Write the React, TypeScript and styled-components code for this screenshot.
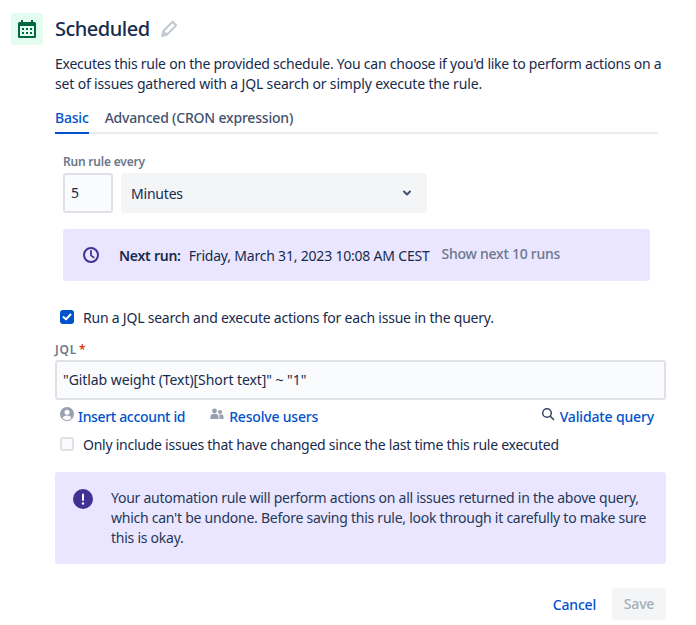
import React from 'react';
import styled, { createGlobalStyle } from 'styled-components';

const GlobalStyle = createGlobalStyle`
  html, body {
    margin: 0;
    padding: 0;
    background: #fff;
    font-family: "Noto Sans", "Open Sans", sans-serif;
    color: #172b4d;
  }
  * { box-sizing: border-box; }
`;

const Page = styled.div`
  width: 696px;
  height: 625px;
  overflow: hidden;
  padding: 13px 30px 0 11px;
  display: flex;
  gap: 12px;
`;

const IconBox = styled.div`
  width: 32px;
  height: 32px;
  flex: none;
  border-radius: 3px;
  background: #e3fcef;
  display: flex;
  align-items: center;
  justify-content: center;
`;

const Main = styled.div`
  flex: 1;
  min-width: 0;
`;

const TitleRow = styled.div`
  height: 32px;
  display: flex;
  align-items: center;
  gap: 10px;
`;

const Title = styled.h1`
  margin: 0;
  font-size: 20px;
  line-height: 32px;
  font-weight: 500;
  letter-spacing: -0.5px;
`;

const Description = styled.p`
  margin: 9px 0 0;
  font-size: 14px;
  line-height: 20px;
  white-space: nowrap;
`;

const DescriptionLine = styled.span<{ $spacing: number }>`
  display: block;
  letter-spacing: ${props => props.$spacing}px;
`;

const Tabs = styled.div`
  margin-top: 8px;
  width: 603px;
  height: 32px;
  display: flex;
  gap: 16px;
  border-bottom: 2px solid #ebecf0;
`;

const Tab = styled.div<{ $active?: boolean }>`
  height: 32px;
  line-height: 32px;
  font-size: 14px;
  font-weight: 500;
  letter-spacing: -0.2px;
  color: ${props => (props.$active ? '#0052cc' : '#42526e')};
  border-bottom: 2px solid ${props => (props.$active ? '#0052cc' : 'transparent')};
`;

const ScheduleBlock = styled.div`
  padding: 20px 0 0 8px;
`;

const FieldLabel = styled.div`
  font-size: 12px;
  line-height: 16px;
  font-weight: 600;
  letter-spacing: -0.2px;
  color: #6b778c;
`;

const ScheduleRow = styled.div`
  margin-top: 3px;
  display: flex;
  gap: 8px;
`;

const NumberInput = styled.div`
  width: 50px;
  height: 40px;
  padding-left: 6px;
  font-size: 14px;
  line-height: 36px;
  background: #fafbfc;
  border: 2px solid #dfe1e6;
  border-radius: 3px;
`;

const SelectBox = styled.div`
  width: 306px;
  height: 40px;
  padding: 0 12px 0 10px;
  display: flex;
  align-items: center;
  justify-content: space-between;
  font-size: 14px;
  letter-spacing: -0.2px;
  background: #f4f5f7;
  border-radius: 3px;
`;

const NextRunBanner = styled.div`
  margin-top: 16px;
  width: 587px;
  height: 52px;
  padding: 0 20px;
  display: flex;
  align-items: center;
  font-size: 14px;
  letter-spacing: -0.2px;
  background: #eae6ff;
  border-radius: 3px;
`;

const NextRunIcon = styled.span`
  width: 16px;
  height: 16px;
  margin-right: 20px;
  display: flex;
`;

const NextRunLabel = styled.strong`
  font-weight: 600;
  letter-spacing: -0.25px;
  margin-right: 8px;
`;

const ShowRuns = styled.span`
  margin: -3px 0 0 12px;
  font-weight: 500;
  letter-spacing: -0.25px;
  color: #6b778c;
`;

const CheckRow = styled.div<{ $top: number; $spacing: number }>`
  margin-top: ${props => props.$top}px;
  padding-left: 5px;
  height: 20px;
  display: flex;
  align-items: center;
  gap: 9px;
  font-size: 14px;
  letter-spacing: ${props => props.$spacing}px;
`;

const CheckBox = styled.span<{ $checked?: boolean }>`
  width: 14px;
  height: 14px;
  flex: none;
  border-radius: 3px;
  display: flex;
  align-items: center;
  justify-content: center;
  background: ${props => (props.$checked ? '#0052cc' : '#fafbfc')};
  border: ${props => (props.$checked ? 'none' : '2px solid #dfe1e6')};
`;

const JqlLabel = styled(FieldLabel)`
  margin-top: 13px;
  line-height: 20px;
  letter-spacing: 0.8px;
`;

const Required = styled.span`
  color: #de350b;
  margin-left: 2px;
`;

const JqlInput = styled.div`
  width: 611px;
  height: 40px;
  padding-left: 6px;
  font-size: 14px;
  line-height: 36px;
  letter-spacing: -0.07px;
  background: #fafbfc;
  border: 2px solid #dfe1e6;
  border-radius: 3px;
`;

const LinkRow = styled.div`
  margin-top: 6px;
  width: 599px;
  height: 20px;
  padding-left: 5px;
  display: flex;
  align-items: center;
`;

const LinkItem = styled.a<{ $push?: boolean; $spacing: number }>`
  display: flex;
  align-items: center;
  gap: 4px;
  font-size: 14px;
  font-weight: 500;
  letter-spacing: ${props => props.$spacing}px;
  color: #0052cc;
  margin-left: ${props => (props.$push ? 'auto' : '0')};

  & > svg {
    margin-top: -4px;
  }
`;

const LinkSpacer = styled.span`
  width: 25px;
`;

const WarningBanner = styled.div`
  margin-top: 18px;
  width: 611px;
  height: 92px;
  padding: 16px 18px;
  display: flex;
  gap: 18px;
  background: #eae6ff;
  border-radius: 3px;
`;

const WarningIcon = styled.span`
  width: 20px;
  height: 20px;
  flex: none;
  margin-top: 1px;
  display: flex;
`;

const WarningText = styled.div`
  font-size: 14px;
  line-height: 20px;
  letter-spacing: -0.25px;
  color: #253858;
  white-space: nowrap;
`;

const Actions = styled.div`
  margin-top: 24px;
  width: 611px;
  display: flex;
  justify-content: flex-end;
  align-items: center;
  gap: 16px;
`;

const CancelButton = styled.span`
  font-size: 14px;
  font-weight: 500;
  letter-spacing: -0.2px;
  color: #0052cc;
`;

const SaveButton = styled.span`
  width: 54px;
  height: 32px;
  line-height: 32px;
  text-align: center;
  font-size: 14px;
  font-weight: 500;
  letter-spacing: -0.2px;
  color: #a5adba;
  background: #f4f5f7;
  border-radius: 3px;
`;

const CalendarIcon = () => (
  <svg width="18" height="18" viewBox="0 0 18 18">
    <path
      d="M3 0h2v2h8V0h2v2h1.500A1.500 1.500 0 0 1 18 3.500v13a1.500 1.500 0 0 1-1.500 1.500h-15A1.500 1.500 0 0 1 0 16.500v-13A1.500 1.500 0 0 1 1.500 2H3z"
      fill="#006644"
    />
    <rect x="2" y="6" width="14" height="10" fill="#e3fcef" />
    <g fill="#006644">
      <rect x="4" y="8" width="2" height="2" />
      <rect x="8" y="8" width="2" height="2" />
      <rect x="12" y="8" width="2" height="2" />
      <rect x="4" y="12" width="2" height="2" />
      <rect x="8" y="12" width="2" height="2" />
      <rect x="12" y="12" width="2" height="2" />
    </g>
  </svg>
);

const EditIcon = () => (
  <svg width="18" height="18" viewBox="0 0 18 18" fill="none">
    <path d="M12.600 1.800l3.600 3.600-9.400 9.400-3.600-3.600z" fill="#fff" stroke="#c1c7d0" strokeWidth="2" strokeLinejoin="round" />
    <path d="M1 17l1-5.600 4.600 4.600z" fill="#c1c7d0" />
  </svg>
);

export default function App() {
  return (
    <>
      <GlobalStyle />
      <Page>
        <IconBox>
          <CalendarIcon />
        </IconBox>
        <Main>
          <TitleRow>
            <Title>Scheduled</Title>
            <EditIcon />
          </TitleRow>
          <Description>
            <DescriptionLine $spacing={-0.24}>
              Executes this rule on the provided schedule. You can choose if you'd like to perform actions on a
            </DescriptionLine>
            <DescriptionLine $spacing={-0.16}>
              set of issues gathered with a JQL search or simply execute the rule.
            </DescriptionLine>
          </Description>
          <Tabs>
            <Tab $active>Basic</Tab>
            <Tab>Advanced (CRON expression)</Tab>
          </Tabs>
          <ScheduleBlock>
            <FieldLabel>Run rule every</FieldLabel>
            <ScheduleRow>
              <NumberInput>5</NumberInput>
              <SelectBox>
                Minutes
                <svg width="16" height="16" viewBox="0 0 16 16" fill="none">
                  <path d="M5 6.500l3 3 3-3" stroke="#42526e" strokeWidth="2" strokeLinecap="round" strokeLinejoin="round" />
                </svg>
              </SelectBox>
            </ScheduleRow>
            <NextRunBanner>
              <NextRunIcon>
                <svg width="16" height="16" viewBox="0 0 16 16" fill="none">
                  <circle cx="8" cy="8" r="7" stroke="#403294" strokeWidth="2" />
                  <path d="M8 4v4.400l2.600 2" stroke="#403294" strokeWidth="1.800" strokeLinecap="round" strokeLinejoin="round" />
                </svg>
              </NextRunIcon>
              <NextRunLabel>Next run:</NextRunLabel>
              Friday, March 31, 2023 10:08 AM CEST
              <ShowRuns>Show next 10 runs</ShowRuns>
            </NextRunBanner>
          </ScheduleBlock>
          <CheckRow $top={26} $spacing={-0.22}>
            <CheckBox $checked>
              <svg width="10" height="8" viewBox="0 0 10 8" fill="none">
                <path d="M1.500 4l2.500 2.400L8.500 1.500" stroke="#fff" strokeWidth="2" strokeLinecap="round" strokeLinejoin="round" />
              </svg>
            </CheckBox>
            Run a JQL search and execute actions for each issue in the query.
          </CheckRow>
          <JqlLabel>
            JQL<Required>*</Required>
          </JqlLabel>
          <JqlInput>"Gitlab weight (Text)[Short text]" ~ "1"</JqlInput>
          <LinkRow>
            <LinkItem $spacing={-0.33}>
              <svg width="14" height="14" viewBox="0 0 14 14">
                <circle cx="7" cy="7" r="7" fill="#97a0af" />
                <circle cx="7" cy="5.200" r="2.500" fill="#fff" />
                <path d="M2.600 11.200C3.400 9.200 5 8.600 7 8.600s3.600.6 4.400 2.600A6 6 0 0 1 7 13a6 6 0 0 1-4.400-1.800z" fill="#fff" />
              </svg>
              Insert account id
            </LinkItem>
            <LinkSpacer />
            <LinkItem $spacing={-0.2}>
              <svg width="14" height="12" viewBox="0 0 14 12" fill="#97a0af" style={{ marginRight: 1 }}>
                <circle cx="4.500" cy="3" r="2.400" />
                <circle cx="10" cy="4" r="2" />
                <path d="M0.500 11V8.300C0.500 7 1.800 6 3 6h3c1.300 0 2.500 1 2.500 2.300V11z" />
                <path d="M9.500 11V8.200c0-.8-.3-1.300-.7-1.700h2.700c1.200 0 2 .9 2 2V11z" />
              </svg>
              Resolve users
            </LinkItem>
            <LinkItem $push $spacing={-0.15}>
              <svg width="14" height="14" viewBox="0 0 14 14" fill="none" style={{ marginRight: 1 }}>
                <circle cx="6" cy="6" r="4.300" stroke="#344563" strokeWidth="1.500" />
                <path d="M9.300 9.300l3.200 3.200" stroke="#344563" strokeWidth="1.600" strokeLinecap="round" />
              </svg>
              Validate query
            </LinkItem>
          </LinkRow>
          <CheckRow $top={8} $spacing={-0.25}>
            <CheckBox />
            Only include issues that have changed since the last time this rule executed
          </CheckRow>
          <WarningBanner>
            <WarningIcon>
              <svg width="20" height="20" viewBox="0 0 20 20">
                <circle cx="10" cy="10" r="10" fill="#403294" />
                <rect x="9" y="4.500" width="2" height="7.500" rx="1" fill="#fff" />
                <circle cx="10" cy="14.500" r="1.200" fill="#fff" />
              </svg>
            </WarningIcon>
            <WarningText>
              Your automation rule will perform actions on all issues returned in the above query,
              <br />
              which can't be undone. Before saving this rule, look through it carefully to make sure
              <br />
              this is okay.
            </WarningText>
          </WarningBanner>
          <Actions>
            <CancelButton>Cancel</CancelButton>
            <SaveButton>Save</SaveButton>
          </Actions>
        </Main>
      </Page>
    </>
  );
}
